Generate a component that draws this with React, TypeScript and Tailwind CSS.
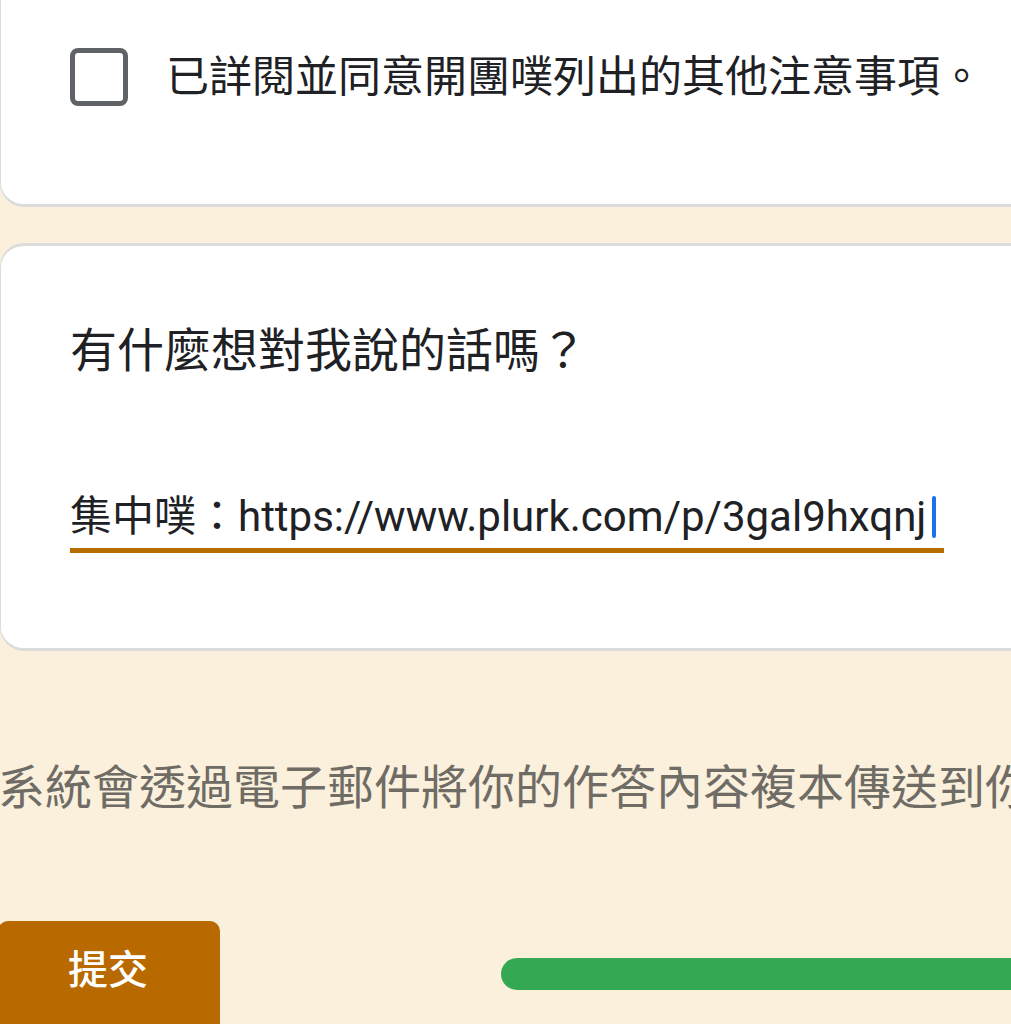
import React from "react";

export default function App() {
  const font = { fontFamily: "Roboto, 'Noto Sans CJK TC', 'Noto Sans', sans-serif" };
  return (
    <div
      className="w-[1011px] h-[1024px] overflow-hidden bg-[#faf0dc] relative"
      style={font}
    >
      <div className="w-[1060px] flex flex-col">
        {/* Card 1 */}
        <div className="h-[207px] bg-white border-l border-b-[3px] border-[#dcdcdc] rounded-bl-[24px] pl-[69px] pt-[48px]">
          <div className="flex items-center gap-[38px]">
            <div className="w-[58px] h-[58px] rounded-[8px] border-[5px] border-[#5f6368] shrink-0" />
            <span className="text-[43px] leading-[58px] text-[#202124] whitespace-nowrap">
              已詳閱並同意開團噗列出的其他注意事項。
            </span>
          </div>
        </div>

        {/* Card 2 */}
        <div className="mt-[36px] h-[408px] bg-white border-l border-t-[3px] border-b-[3px] border-[#dcdcdc] rounded-l-[24px] pl-[69px] pt-[75px]">
          <div className="text-[47px] leading-[60px] text-[#202124] whitespace-nowrap">
            有什麼想對我說的話嗎？
          </div>
          <div className="mt-[110px] w-[874px] relative">
            <div className="text-[42px] leading-[52px] text-[#202124] whitespace-nowrap flex items-center">
              <span>集中噗：https://www.plurk.com/p/3gal9hxqnj</span>
              <span className="inline-block w-[4px] h-[42px] bg-[#1a73e8] rounded-sm ml-[6px]" />
            </div>
            <div className="mt-[5px] h-[5px] bg-[#b76e00]" />
          </div>
        </div>

        {/* Footer text */}
        <div className="mt-[107px] -ml-[2px] text-[47px] leading-[60px] text-[#6f6b65] whitespace-nowrap">
          系統會透過電子郵件將你的作答內容複本傳送到你
        </div>

        {/* Bottom row */}
        <div className="mt-[103px] flex items-start">
          <div className="shrink-0 w-[222px] h-[120px] bg-[#b86a00] rounded-[10px] -ml-[2px] pl-[70px] pt-[22px]">
            <span className="text-[40px] leading-[56px] text-white font-medium">提交</span>
          </div>
          <div className="shrink-0 ml-[281px] mt-[37px] w-[600px] h-[32px] rounded-full bg-[#34a853]" />
        </div>
      </div>
    </div>
  );
}
